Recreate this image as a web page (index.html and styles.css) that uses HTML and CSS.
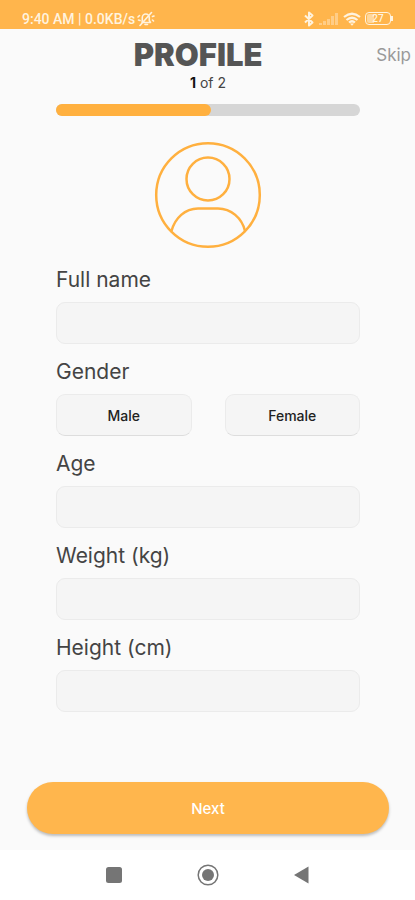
FILE: index.html
```html
<!DOCTYPE html>
<html lang="en">
<head>
<meta charset="utf-8">
<meta name="viewport" content="width=device-width, initial-scale=1">
<title>Profile</title>
<link rel="stylesheet" href="styles.css">
</head>
<body>
<div class="status">
  <div class="status-group">
    <span>9:40 AM | 0.0KB/s</span>
    <svg width="18" height="16" viewBox="0 0 18 16" fill="none" stroke="currentColor" stroke-width="1.6" stroke-linecap="round" stroke-linejoin="round">
      <path d="M5 11.5h8.500L12.300 9.500V6.500a3.500 3.500 0 0 0-7 0v3zM8 13.500h2.500M3 14.500 14.500 1.500M2.500 4.500 1 6M1.500 9l1.500.5M15.500 5.500l1.500-.5M15.500 9l1 1"/>
    </svg>
  </div>
  <div class="status-group status-icons">
    <svg width="12" height="16" viewBox="0 0 12 16" fill="none" stroke="currentColor" stroke-width="2" stroke-linejoin="round">
      <path d="M2 4.500 9.500 11.500 6 14.500v-13L9.500 4.500 2 11.500"/>
    </svg>
    <svg width="20" height="14" viewBox="0 0 20 14" fill="currentColor" opacity=".4">
      <path d="M0 11h3v2H0zM4 9h3v4H4zM8 7h3v6H8zM12 4h3v9h-3zM16 1h3v12h-3z"/>
    </svg>
    <svg width="18" height="14" viewBox="0 0 18 14" fill="none" stroke="currentColor" stroke-width="2.2">
      <path d="M1 5q8-6.500 16 0M3.500 8q5.500-4.500 11 0M6 10.500q3-2.500 6 0"/>
      <path d="M7 11.500h4l-2 2.200z" fill="currentColor" stroke="none"/>
    </svg>
    <span class="battery"><span>27</span></span>
  </div>
</div>

<main class="screen">
  <header class="header">
    <h1 class="title">PROFILE</h1>
    <a class="skip" href="#skip">Skip</a>
  </header>
  <form class="form" id="profile">
    <p class="step"><b>1</b> of 2</p>
    <div class="progress"><div class="progress-fill"></div></div>
    <svg class="avatar" width="108" height="108" viewBox="0 0 108 108" fill="none" stroke="currentColor" stroke-width="2.500">
      <circle cx="54" cy="54" r="51.800"/>
      <circle cx="54" cy="38" r="21.500"/>
      <path d="M17.500 90C21 77 31 67.500 44 67.500H64C77 67.500 88 77 91 90"/>
    </svg>
    <div class="field">
      <label class="label" for="name">Full name</label>
      <input class="box" id="name" type="text">
    </div>
    <div class="field" role="group" aria-labelledby="gender">
      <span class="label" id="gender">Gender</span>
      <div class="choices">
        <button class="box choice" type="button">Male</button>
        <button class="box choice" type="button">Female</button>
      </div>
    </div>
    <div class="field">
      <label class="label" for="age">Age</label>
      <input class="box" id="age" type="text" inputmode="numeric">
    </div>
    <div class="field">
      <label class="label" for="weight">Weight (kg)</label>
      <input class="box" id="weight" type="text" inputmode="decimal">
    </div>
    <div class="field">
      <label class="label" for="height">Height (cm)</label>
      <input class="box" id="height" type="text" inputmode="decimal">
    </div>
  </form>
  <button class="next" type="submit" form="profile">Next</button>
</main>

<nav class="navbar">
  <button class="nav-button" type="button" aria-label="Recent apps">
    <svg width="22" height="22" viewBox="0 0 22 22" fill="currentColor"><rect x="3" y="3" width="16" height="16" rx="2.500"/></svg>
  </button>
  <button class="nav-button" type="button" aria-label="Home">
    <svg width="22" height="22" viewBox="0 0 22 22" fill="currentColor"><circle cx="11" cy="11" r="9.800" fill="none" stroke="currentColor" stroke-width="1.500"/><circle cx="11" cy="11" r="6"/></svg>
  </button>
  <button class="nav-button" type="button" aria-label="Back">
    <svg width="22" height="22" viewBox="0 0 22 22" fill="currentColor"><path d="M3 11 17.500 2.500v17z"/></svg>
  </button>
</nav>
</body>
</html>
```

FILE: styles.css
```css
* {
  box-sizing: border-box;
}

body {
  margin: 0;
  min-height: 100vh;
  display: flex;
  flex-direction: column;
  background: #fafafa;
  color: #444;
  font-family: Inter, "Liberation Sans", sans-serif;
}

button,
input {
  font: inherit;
}

.status {
  display: flex;
  justify-content: space-between;
  height: 29px;
  padding: 8px 24px 0 22px;
  background: #ffb54c;
  color: #fff3df;
  font: 500 14px/22px Roboto, sans-serif;
}

.status-group {
  display: flex;
  align-items: center;
  gap: 2px;
}

.status-icons {
  gap: 4px;
}

.battery {
  position: relative;
  width: 26px;
  height: 13px;
  border: 1px solid currentColor;
  border-radius: 4px;
  padding: 1px;
  font-size: 10px;
  line-height: 9px;
  text-align: center;
}

.battery span {
  display: block;
  background: linear-gradient(90deg, #ffd79b 30%, transparent 30%);
  border-radius: 2px;
}

.battery::after {
  content: "";
  position: absolute;
  top: 3px;
  right: -3px;
  width: 2px;
  height: 5px;
  background: currentColor;
}

.screen {
  flex: 1;
  display: flex;
  flex-direction: column;
}

.header {
  display: grid;
  grid-template-columns: 1fr auto;
  align-items: center;
  padding: 8px 4px 0 20px;
}

.title {
  margin: 0;
  color: #555;
  font-size: 31px;
  font-weight: 900;
  line-height: 36px;
  text-align: center;
}

.skip {
  color: #999;
  font-size: 17px;
  line-height: 36px;
  text-decoration: none;
}

.form {
  padding: 0 55px 0 56px;
}

.step {
  margin: 0 0 11px;
  font-size: 14px;
  line-height: 20px;
  text-align: center;
}

.step b {
  color: #111;
}

.progress {
  height: 12px;
  border-radius: 6px;
  background: #d6d6d6;
}

.progress-fill {
  width: 51%;
  height: 100%;
  border-radius: 6px;
  background: #ffb03f;
}

.avatar {
  display: block;
  margin: 25px auto 3px;
  color: #ffb03f;
}

.label {
  display: block;
  padding: 13px 0 7px;
  font-size: 21px;
  line-height: 30px;
}

.box {
  display: block;
  width: 100%;
  height: 42px;
  padding: 0 12px;
  border: 1px solid #ebebeb;
  border-radius: 9px;
  background: #f5f5f5;
}

.choices {
  display: flex;
  gap: 33px;
}

.choice {
  flex: 1;
  border-bottom-color: #ddd;
  color: #222;
  font-size: 14px;
  font-weight: 500;
}

.next {
  height: 52px;
  margin: auto 26px 16px 27px;
  border: 0;
  border-radius: 26px;
  background: #ffb64d;
  box-shadow: 0 2px 3px rgba(0, 0, 0, 0.25);
  color: #fff;
  font-size: 15px;
  font-weight: 500;
}

.navbar {
  display: flex;
  justify-content: center;
  gap: 72px;
  height: 50px;
  background: #fff;
}

.nav-button {
  display: grid;
  place-items: center;
  width: 22px;
  padding: 0;
  border: 0;
  background: none;
  color: #757575;
}
```
